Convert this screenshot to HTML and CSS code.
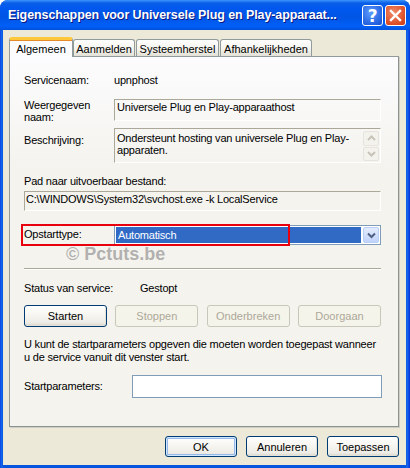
FILE: index.html
```html
<!DOCTYPE html>
<html lang="nl">
<head>
  <meta charset="UTF-8" />
  <title>Eigenschappen voor Universele Plug en Play-apparaathost</title>
  <link rel="stylesheet" href="styles.css">
</head>
<body>
  <div class="window">
    <div class="titlebar">
      <span class="title">Eigenschappen voor Universele Plug en Play-apparaat...</span>
      <div class="caption-buttons">
        <span class="cap-btn help">?</span>
        <span class="cap-btn close">
          <svg width="13" height="13" viewBox="0 0 13 13">
            <path d="M2 2 L11 11 M11 2 L2 11" stroke="#fff" stroke-width="2.4" stroke-linecap="square"/>
          </svg>
        </span>
      </div>
    </div>

    <div class="frame">
      <div class="tabs">
        <div class="tab active">Algemeen</div>
        <div class="tab">Aanmelden</div>
        <div class="tab">Systeemherstel</div>
        <div class="tab wide">Afhankelijkheden</div>
      </div>

      <div class="panel">
        <div class="row row-name">
          <span class="label">Servicenaam:</span>
          <span>upnphost</span>
        </div>

        <div class="row row-display">
          <span class="label two-lines">Weergegeven naam:</span>
          <div class="readonly box-display">Universele Plug en Play-apparaathost</div>
        </div>

        <div class="row row-desc">
          <span class="label label-desc">Beschrijving:</span>
          <div class="readonly box-desc">
            <div class="desc-text">Ondersteunt hosting van universele Plug en Play-apparaten.</div>
            <div class="scrollbar">
              <span class="scroll-btn">
                <svg width="9" height="6" viewBox="0 0 9 6"><path d="M1 5 L4.5 1.5 L8 5" fill="none" stroke="#c6c4b7" stroke-width="2"/></svg>
              </span>
              <span class="scroll-btn">
                <svg width="9" height="6" viewBox="0 0 9 6"><path d="M1 1 L4.5 4.5 L8 1" fill="none" stroke="#c6c4b7" stroke-width="2"/></svg>
              </span>
            </div>
          </div>
        </div>

        <div class="path-label">Pad naar uitvoerbaar bestand:</div>
        <div class="readonly box-path">C:\WINDOWS\System32\svchost.exe -k LocalService</div>

        <div class="row row-startup">
          <span class="label">Opstarttype:</span>
          <div class="combo">
            <span class="combo-value">Automatisch</span>
            <span class="combo-btn">
              <svg width="9" height="7" viewBox="0 0 9 7"><path d="M1 1.5 L4.5 5 L8 1.5" fill="none" stroke="#4d6185" stroke-width="2"/></svg>
            </span>
          </div>
          <div class="highlight"></div>
        </div>

        <div class="separator"></div>

        <div class="row row-status">
          <span class="label label-status">Status van service:</span>
          <span>Gestopt</span>
        </div>

        <div class="service-buttons">
          <button class="btn">Starten</button>
          <button class="btn" disabled>Stoppen</button>
          <button class="btn" disabled>Onderbreken</button>
          <button class="btn" disabled>Doorgaan</button>
        </div>

        <p class="hint">U kunt de startparameters opgeven die moeten worden toegepast wanneer u de service vanuit dit venster start.</p>

        <div class="row row-params">
          <span class="label label-params">Startparameters:</span>
          <div class="input"></div>
        </div>

        <div class="watermark">© Pctuts.be</div>
      </div>

      <div class="dialog-buttons">
        <button class="btn dlg default">OK</button>
        <button class="btn dlg">Annuleren</button>
        <button class="btn dlg">Toepassen</button>
      </div>
    </div>
  </div>
</body>
</html>
```

FILE: styles.css
```css
/* Windows XP dialoog */
body {
  margin: 0;
  font-family: "Liberation Sans", Arial, sans-serif;
  font-size: 11px;
  letter-spacing: -0.2px;
  color: #000;
  background: #fff;
}

.window {
  width: 410px;
  height: 468px;
  box-sizing: border-box;
  background: linear-gradient(to right, #0831d9, #166aee 1px, #0855dd 3px, #0855dd 406px, #166aee 407px, #0831d9);
  border-radius: 8px 8px 0 0;
  display: flex;
  flex-direction: column;
  overflow: hidden;
}

.titlebar {
  height: 30px;
  flex: none;
  display: flex;
  align-items: center;
  justify-content: space-between;
  padding: 0 4px 0 8px;
  background: linear-gradient(to bottom, #3d95ff 0, #0a5fe6 3px, #0058ee 8px, #0055e5 18px, #0060f8 26px, #0050dc 30px);
}

.title {
  font-weight: bold;
  font-size: 12.5px;
  color: #fff;
  text-shadow: 1px 1px #0a1883;
  white-space: nowrap;
  letter-spacing: -0.1px;
}

.caption-buttons {
  display: flex;
  gap: 2px;
  margin-top: 1px;
}

.cap-btn {
  width: 21px;
  height: 21px;
  box-sizing: border-box;
  border: 1px solid #fff;
  border-radius: 3px;
  display: flex;
  align-items: center;
  justify-content: center;
  color: #fff;
}

.help {
  background: radial-gradient(circle at 40% 35%, #5c9bff, #2663e0 70%, #1a4fd0);
  font-weight: bold;
  font-size: 17px;
  font-family: "DejaVu Sans", sans-serif;
}

.close {
  background: radial-gradient(circle at 40% 35%, #f08c6c, #dc4d25 70%, #c53b18);
}

.frame {
  flex: 1;
  margin: 0 4px 3px 3px;
  background: #ece9d8;
  padding: 7px 7px 0 6px;
}

.tabs {
  display: flex;
  height: 19px;
  position: relative;
  z-index: 1;
}

.tab {
  width: 62px;
  height: 17px;
  margin-top: 2px;
  box-sizing: border-box;
  border: 1px solid #919b9c;
  border-bottom: none;
  border-radius: 3px 3px 0 0;
  background: linear-gradient(to bottom, #fff, #f3f2ec 60%, #e3e1d6);
  display: flex;
  align-items: center;
  justify-content: center;
  padding-top: 1px;
  letter-spacing: 0;
}

.tab + .tab {
  margin-left: 1px;
}

.tab:nth-child(3) {
  width: 83px;
}

.tab.wide {
  width: 92px;
}

.tab.active {
  width: 64px;
  height: 20px;
  margin-top: 0;
  border-top: 3px solid #ffc83c;
  border-radius: 3px 3px 0 0;
  background: #fcfcfe;
  box-shadow: inset 0 1px #e68b2c;
  padding-top: 0;
}

.tab.active + .tab {
  margin-left: 0;
}

.panel {
  position: relative;
  height: 371px;
  box-sizing: border-box;
  border: 1px solid #919b9c;
  border-right-color: #8a9294;
  border-bottom-color: #8a9294;
  box-shadow: 1px 1px 0 #d0cec3;
  background: linear-gradient(to bottom, #fcfcfe, #f4f3ee 30%, #f4f3ee);
  padding: 17px 17px 0 14px;
}

.row {
  display: flex;
  line-height: 13px;
}

.label {
  width: 90px;
  flex: none;
}

.row-name {
  height: 13px;
}

.row-display {
  margin-top: 12px;
  height: 22px;
}

.two-lines {
  line-height: 12px;
  width: 70px;
  margin-right: 20px;
}

.readonly {
  flex: 1;
  box-sizing: border-box;
  border: 1px solid #fff;
  border-top-color: #aca899;
  border-left-color: #aca899;
  padding: 1px 2px;
}

.box-display {
  height: 22px;
}

.row-desc {
  margin-top: 7px;
  height: 35px;
}

.label-desc {
  padding-top: 6px;
}

.box-desc {
  height: 35px;
  display: flex;
  padding: 2px 1px 1px 2px;
}

.desc-text {
  flex: 1;
  line-height: 12px;
  padding-top: 1px;
}

.scrollbar {
  width: 16px;
  display: flex;
  flex-direction: column;
  gap: 1px;
}

.scroll-btn {
  height: 15px;
  box-sizing: border-box;
  border: 1px solid #e6e4dc;
  border-radius: 2px;
  background: #f3f2ec;
  display: flex;
  align-items: center;
  justify-content: center;
}

.path-label {
  margin-top: 12px;
  line-height: 13px;
}

.box-path {
  margin-top: 3px;
  height: 20px;
  padding: 1px 1px;
  line-height: 13px;
  white-space: nowrap;
}

.row-startup {
  position: relative;
  margin-top: 13px;
  height: 21px;
  align-items: center;
}

.combo {
  flex: 1;
  height: 20px;
  margin-top: 1px;
  box-sizing: border-box;
  border: 1px solid #7f9db9;
  background: #fff;
  display: flex;
  padding: 1px;
  gap: 2px;
}

.combo-value {
  flex: 1;
  background: #316ac5;
  color: #fff;
  padding-left: 2px;
  line-height: 16px;
}

.combo-btn {
  width: 16px;
  box-sizing: border-box;
  border: 1px solid #b9cff8;
  border-radius: 2px;
  background: linear-gradient(to bottom, #e3ecfd, #c1d3fb);
  display: flex;
  align-items: center;
  justify-content: center;
}

.highlight {
  position: absolute;
  left: -3px;
  top: 0;
  width: 269px;
  height: 22px;
  box-sizing: border-box;
  border: 2px solid #e8000e;
}

.separator {
  margin-top: 23px;
  height: 1px;
  background: #aca899;
  border-bottom: 1px solid #fff;
}

.row-status {
  margin-top: 12px;
  height: 13px;
}

.label-status {
  width: 116px;
}

.service-buttons {
  display: flex;
  justify-content: space-between;
  margin-top: 10px;
}

.btn {
  font-family: inherit;
  font-size: 11px;
  color: #000;
  height: 22px;
  width: 83px;
  padding: 0;
  border: 1px solid #003c74;
  border-radius: 3px;
  background: linear-gradient(to bottom, #fff, #f5f4ef 50%, #ecebe5 85%, #d6d0c5);
  box-shadow: inset -1px -1px 0 #e3e0d6;
}

.btn:disabled {
  color: #aca899;
  border-color: #c9c7ba;
  background: #f5f4ea;
  box-shadow: none;
}

.hint {
  margin: 11px 0 0;
  line-height: 13px;
}

.row-params {
  margin-top: 11px;
  height: 23px;
  align-items: center;
}

.label-params {
  width: 108px;
}

.input {
  flex: 1;
  height: 23px;
  margin-right: -1px;
  box-sizing: border-box;
  border: 1px solid #7f9db9;
  background: #fff;
}

.watermark {
  position: absolute;
  left: 56px;
  top: 187px;
  font-size: 18px;
  line-height: 20px;
  font-weight: bold;
  letter-spacing: 0;
  color: rgba(120, 120, 120, 0.55);
}

.dialog-buttons {
  display: flex;
  justify-content: flex-end;
  gap: 9px;
  margin-top: 9px;
}

.btn.dlg {
  width: 72px;
  height: 21px;
}

.btn.default {
  box-shadow: inset 0 0 0 1px #cee7ff, inset 0 0 0 2px #98b8ea;
}
```
